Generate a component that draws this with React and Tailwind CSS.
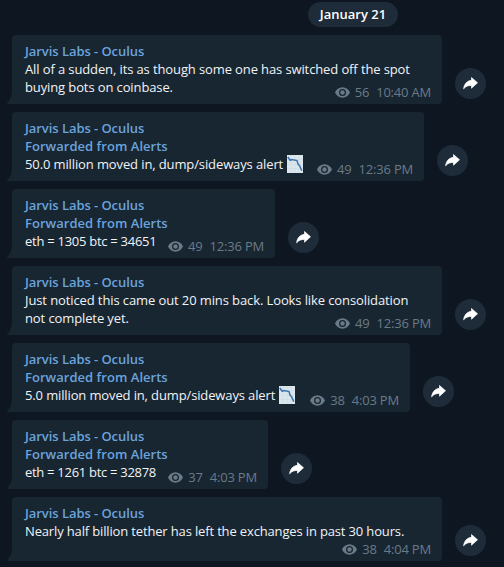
const messages = [
  { lines: ["All of a sudden, its as though some one has switched off the spot", "buying bots on coinbase."], views: 56, time: "10:40 AM", size: "w-[430px] h-[69px]", tracking: "tracking-[-0.115px]" },
  { forwarded: true, chart: true, lines: ["50.0 million moved in, dump/sideways alert"], views: 49, time: "12:36 PM", size: "w-[412px] h-[69px]", tracking: "tracking-[-0.115px]" },
  { forwarded: true, lines: ["eth = 1305 btc = 34651"], views: 49, time: "12:36 PM", size: "w-[263px] h-[69px]", tracking: "tracking-[-0.27px]" },
  { lines: ["Just noticed this came out 20 mins back. Looks like consolidation", "not complete yet."], views: 49, time: "12:36 PM", size: "w-[430px] h-[69px]", tracking: "tracking-[-0.105px]" },
  { forwarded: true, chart: true, lines: ["5.0 million moved in, dump/sideways alert"], views: 38, time: "4:03 PM", size: "w-[398px] h-[69px]", tracking: "tracking-[-0.13px]" },
  { forwarded: true, lines: ["eth = 1261 btc = 32878"], views: 37, time: "4:03 PM", size: "w-[256px] h-[69px]", tracking: "tracking-[-0.29px]" },
  { lines: ["Nearly half billion tether has left the exchanges in past 30 hours."], views: 38, time: "4:04 PM", size: "w-[430px] h-[64px]", tracking: "tracking-[-0.15px]" },
];

function Eye() {
  return (
    <svg className="mr-[5px] h-[11px] w-[15px] shrink-0" viewBox="0 0 15 11">
      <path
        fill="#6a7a87"
        fillRule="evenodd"
        d="M7.5 0.3C4.1 .3 1.3 2.4 0 5.5c1.3 3.1 4.1 5.2 7.5 5.2s6.2-2.1 7.5-5.2C13.700 2.400 10.900.3 7.500.3zM7.500 9a3.500 3.500 0 1 1 0-7 3.500 3.500 0 0 1 0 7z"
      />
      <circle cx="7.5" cy="5.5" r="2.2" fill="#6a7a87" />
    </svg>
  );
}

function ChartDown() {
  return (
    <svg className="ml-1 h-[18px] w-4 shrink-0" viewBox="0 0 16 18">
      <rect width="16" height="18" fill="#dce6ed" />
      <path d="M4 0v18M8 0v18M12 0v18M0 4.500h16M0 9h16M0 13.500h16" stroke="#cbd8e2" strokeWidth=".5" />
      <path d="M.8 2L3.200 5.300L5 4.600L10 5.600L11.200 9.500L12.500 10.500L14.800 15.800" fill="none" stroke="#3d73b0" strokeWidth="1.500" />
    </svg>
  );
}

function Share() {
  return (
    <div className="mb-[5px] ml-[13px] flex size-[31px] items-center justify-center rounded-full bg-[#1e2c3a]">
      <svg className="h-[13px] w-[15px]" viewBox="0 0 15 13">
        <path d="M8.500.5L14.500 5.800L8.500 11.200V8.500C5.300 8.300 3 9.200.6 11.800C1.100 7.400 3.700 3.900 8.500 3.300z" fill="#fff" stroke="#fff" strokeWidth=".7" strokeLinejoin="round" />
      </svg>
    </div>
  );
}

function Message({ forwarded, chart, lines, views, time, size, tracking }) {
  return (
    <div className="flex items-end">
      <svg className="h-3 w-1.5 shrink-0" viewBox="0 0 6 12">
        <path d="M6 0V12H1.500Q.5 12 1 11.200Q5 8 6 0z" fill="#182632" />
      </svg>
      <div className={`grid rounded-t-[4px] rounded-br-[4px] bg-[#182632] pr-[11px] pl-[13px] ${size}`}>
        <div className="col-start-1 row-start-1 self-start pt-[7px] text-[13px] leading-[18px] whitespace-nowrap text-[#f1f3f5]">
          <div className="font-semibold tracking-[-0.06px] text-[#6ba3dc]">Jarvis Labs - Oculus</div>
          {forwarded && <div className="font-semibold tracking-[0.03px] text-[#6ba3dc]">Forwarded from Alerts</div>}
          {lines.map((line) => (
            <div key={line} className="flex h-[18px] items-center">
              <span className={tracking}>{line}</span>
              {chart && <ChartDown />}
            </div>
          ))}
        </div>
        <div className="col-start-1 row-start-1 mb-[3px] flex items-center self-end justify-self-end text-[13px] leading-[18px] tracking-[-0.2px] whitespace-nowrap text-[#6a7a87]">
          <Eye />
          <span className="mr-[7px]">{views}</span>
          <span>{time}</span>
        </div>
      </div>
      <Share />
    </div>
  );
}

export default function App() {
  return (
    <main className="h-[567px] w-[504px] overflow-hidden bg-[#0e1621] pl-1.5 font-['Open_Sans','Noto_Sans',sans-serif]">
      <div className="flex h-[35px] pt-[2px] pl-[302px]">
        <div className="flex h-[25px] w-[90px] items-center justify-center rounded-full bg-[#1e2c3a] text-[13px] font-semibold whitespace-nowrap text-white">
          January 21
        </div>
      </div>
      <div className="flex flex-col gap-2">
        {messages.map((message, index) => (
          <Message key={index} {...message} />
        ))}
      </div>
    </main>
  );
}
